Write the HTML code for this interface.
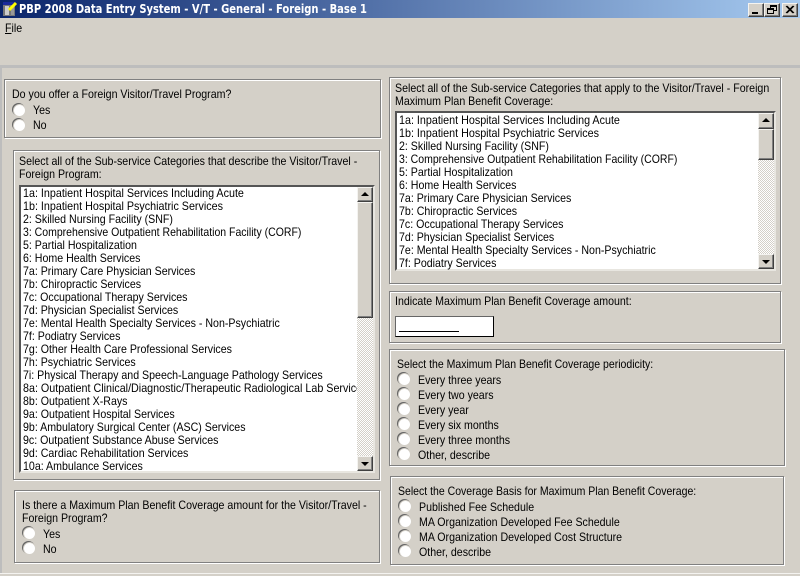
<!DOCTYPE html>
<html><head><meta charset="utf-8"><style>
html,body{margin:0;padding:0;background:#d4d0c8;}
#p{position:relative;width:800px;height:576px;overflow:hidden;background:#d4d0c8;font:12px/13px "Liberation Sans",sans-serif;color:#000;}
#p div{position:absolute;box-sizing:border-box;}
.t{white-space:nowrap;transform:scaleX(.885);transform-origin:0 0;}
.w{transform:scaleX(.895);}
.n{transform:scaleX(.875);}
.g{border:1px solid #808080;box-shadow:inset 1px 1px 0 #fff,1px 1px 0 #fff;}
.r{width:13px;height:13px;border-radius:50%;background:#fff;border:1px solid #d4d0c8;box-shadow:-1px -1px 0 0 #666;}
.l{background:#fff;border:2px solid;border-color:#555 #e8e6e0 #e8e6e0 #555;overflow:hidden;}
.tr{background-color:#eee;background-image:repeating-conic-gradient(#d4d0c8 0 25%,#fff 0 50%);background-size:2px 2px;}
.b{background:#d4d0c8;border:1px solid;border-color:#f4f3f0 #404040 #404040 #f4f3f0;box-shadow:inset -1px -1px 0 #808080;}
.up{width:0;height:0;border:4px solid transparent;border-top:0;border-bottom:4px solid #000;}
.dn{width:0;height:0;border:4px solid transparent;border-bottom:0;border-top:4px solid #000;}
</style></head><body><div id="p">

<div style="left:0;top:0;width:800px;height:18px;background:linear-gradient(90deg,#0a246a,#a6caf0);"></div>
<svg style="position:absolute;left:2px;top:1px" width="16" height="16" viewBox="0 0 16 16"><rect x="1" y="1" width="12" height="4" fill="#1a2a9a"/><rect x="1" y="4" width="12" height="11" fill="#777"/><rect x="3" y="5" width="4" height="9" fill="#ccc"/><rect x="9" y="5" width="3" height="9" fill="#999"/><path d="M7 9L14 2" stroke="#ff0" stroke-width="3"/></svg>
<div class="t" style="left:19px;top:2px;color:#fff;font:bold 12px/14px 'DejaVu Sans',sans-serif;transform:scaleX(.83);">PBP 2008 Data Entry System - V/T - General - Foreign - Base 1</div>
<div class="b" style="left:748px;top:3px;width:16px;height:14px;"></div>
<div style="left:752px;top:12px;width:6px;height:2px;background:#000;"></div>
<div class="b" style="left:764px;top:3px;width:16px;height:14px;"></div>
<div style="left:770px;top:5px;width:7px;height:6px;border:1px solid #000;border-top-width:2px;"></div>
<div style="left:767px;top:8px;width:7px;height:6px;border:1px solid #000;border-top-width:2px;background:#d4d0c8;"></div>
<div class="b" style="left:782px;top:3px;width:16px;height:14px;"></div>
<svg style="position:absolute;left:785px;top:5px" width="10" height="10"><path d="M1 1L8 8M2 1L9 8M8 1L1 8M9 1L2 8" stroke="#000" stroke-width="1"/></svg>

<div class="t" style="left:5px;top:22px;"><span style="text-decoration:underline">F</span>ile</div>
<div style="left:0;top:65px;width:800px;height:3px;background:#bdbdbd;"></div>
<div style="left:0;top:68px;width:2px;height:505px;background:#bdbdbd;"></div>
<div style="left:0;top:573px;width:800px;height:1px;background:#f4f3f0;"></div>

<div class="g" style="left:4px;top:79px;width:377px;height:59px;"></div>
<div class="t" style="left:12px;top:88px;">Do you offer a Foreign Visitor/Travel Program?</div>
<div class="r" style="left:13px;top:104px;"></div><div class="t" style="left:33px;top:104px;">Yes</div>
<div class="r" style="left:13px;top:119px;"></div><div class="t" style="left:33px;top:119px;">No</div>

<div class="g" style="left:13px;top:150px;width:367px;height:330px;"></div>
<div class="t" style="left:19px;top:155px;">Select all of the Sub-service Categories that describe the Visitor/Travel -</div>
<div class="t" style="left:19px;top:168px;">Foreign Program:</div>
<div class="l" style="left:19px;top:185px;width:356px;height:288px;"></div>
<div class="t w" style="left:23px;top:187px;">1a: Inpatient Hospital Services Including Acute</div>
<div class="t w" style="left:23px;top:200px;">1b: Inpatient Hospital Psychiatric Services</div>
<div class="t" style="left:23px;top:213px;">2: Skilled Nursing Facility (SNF)</div>
<div class="t n" style="left:23px;top:226px;">3: Comprehensive Outpatient Rehabilitation Facility (CORF)</div>
<div class="t" style="left:23px;top:239px;">5: Partial Hospitalization</div>
<div class="t" style="left:23px;top:252px;">6: Home Health Services</div>
<div class="t" style="left:23px;top:265px;">7a: Primary Care Physician Services</div>
<div class="t" style="left:23px;top:278px;">7b: Chiropractic Services</div>
<div class="t" style="left:23px;top:291px;">7c: Occupational Therapy Services</div>
<div class="t" style="left:23px;top:304px;">7d: Physician Specialist Services</div>
<div class="t" style="left:23px;top:317px;">7e: Mental Health Specialty Services - Non-Psychiatric</div>
<div class="t" style="left:23px;top:330px;">7f: Podiatry Services</div>
<div class="t" style="left:23px;top:343px;">7g: Other Health Care Professional Services</div>
<div class="t" style="left:23px;top:356px;">7h: Psychiatric Services</div>
<div class="t" style="left:23px;top:369px;">7i: Physical Therapy and Speech-Language Pathology Services</div>
<div style="left:21px;top:382px;width:336px;height:13px;overflow:hidden;"><div class="t w" style="left:2px;top:0;">8a: Outpatient Clinical/Diagnostic/Therapeutic Radiological Lab Services</div></div>
<div class="t" style="left:23px;top:395px;">8b: Outpatient X-Rays</div>
<div class="t" style="left:23px;top:408px;">9a: Outpatient Hospital Services</div>
<div class="t" style="left:23px;top:421px;">9b: Ambulatory Surgical Center (ASC) Services</div>
<div class="t" style="left:23px;top:434px;">9c: Outpatient Substance Abuse Services</div>
<div class="t" style="left:23px;top:447px;">9d: Cardiac Rehabilitation Services</div>
<div class="t" style="left:23px;top:460px;">10a: Ambulance Services</div>
<div class="tr" style="left:357px;top:187px;width:16px;height:284px;"></div>
<div class="b" style="left:357px;top:187px;width:16px;height:15px;"></div><div class="up" style="left:361px;top:192px;"></div>
<div class="b" style="left:357px;top:202px;width:16px;height:116px;"></div>
<div class="b" style="left:357px;top:456px;width:16px;height:15px;"></div><div class="dn" style="left:361px;top:462px;"></div>

<div class="g" style="left:14px;top:490px;width:366px;height:73px;"></div>
<div class="t" style="left:22px;top:499px;">Is there a Maximum Plan Benefit Coverage amount for the Visitor/Travel -</div>
<div class="t" style="left:22px;top:512px;">Foreign Program?</div>
<div class="r" style="left:23px;top:527px;"></div><div class="t" style="left:43px;top:528px;">Yes</div>
<div class="r" style="left:23px;top:542px;"></div><div class="t" style="left:43px;top:543px;">No</div>

<div class="g" style="left:389px;top:77px;width:392px;height:207px;"></div>
<div class="t" style="left:395px;top:82px;">Select all of the Sub-service Categories that apply to the Visitor/Travel - Foreign</div>
<div class="t" style="left:395px;top:95px;">Maximum Plan Benefit Coverage:</div>
<div class="l" style="left:395px;top:111px;width:381px;height:160px;"></div>
<div class="t w" style="left:399px;top:114px;">1a: Inpatient Hospital Services Including Acute</div>
<div class="t w" style="left:399px;top:127px;">1b: Inpatient Hospital Psychiatric Services</div>
<div class="t" style="left:399px;top:140px;">2: Skilled Nursing Facility (SNF)</div>
<div class="t n" style="left:399px;top:153px;">3: Comprehensive Outpatient Rehabilitation Facility (CORF)</div>
<div class="t" style="left:399px;top:166px;">5: Partial Hospitalization</div>
<div class="t" style="left:399px;top:179px;">6: Home Health Services</div>
<div class="t" style="left:399px;top:192px;">7a: Primary Care Physician Services</div>
<div class="t" style="left:399px;top:205px;">7b: Chiropractic Services</div>
<div class="t" style="left:399px;top:218px;">7c: Occupational Therapy Services</div>
<div class="t" style="left:399px;top:231px;">7d: Physician Specialist Services</div>
<div class="t" style="left:399px;top:244px;">7e: Mental Health Specialty Services - Non-Psychiatric</div>
<div class="t" style="left:399px;top:257px;">7f: Podiatry Services</div>
<div class="tr" style="left:758px;top:113px;width:16px;height:156px;"></div>
<div class="b" style="left:758px;top:113px;width:16px;height:16px;"></div><div class="up" style="left:762px;top:118px;"></div>
<div class="b" style="left:758px;top:129px;width:16px;height:31px;"></div>
<div class="b" style="left:758px;top:254px;width:16px;height:15px;"></div><div class="dn" style="left:762px;top:260px;"></div>

<div class="g" style="left:389px;top:291px;width:392px;height:52px;"></div>
<div class="t" style="left:395px;top:295px;">Indicate Maximum Plan Benefit Coverage amount:</div>
<div style="left:395px;top:316px;width:99px;height:21px;background:#fff;border:1px solid;border-color:#666 #000 #000 #666;"></div>
<div style="left:399px;top:331px;width:60px;height:1px;background:#000;"></div>

<div class="g" style="left:389px;top:349px;width:396px;height:117px;"></div>
<div class="t n" style="left:397px;top:358px;">Select the Maximum Plan Benefit Coverage periodicity:</div>
<div class="r" style="left:398px;top:373px;"></div><div class="t" style="left:418px;top:374px;">Every three years</div>
<div class="r" style="left:398px;top:388px;"></div><div class="t" style="left:418px;top:389px;">Every two years</div>
<div class="r" style="left:398px;top:403px;"></div><div class="t" style="left:418px;top:404px;">Every year</div>
<div class="r" style="left:398px;top:418px;"></div><div class="t" style="left:418px;top:419px;">Every six months</div>
<div class="r" style="left:398px;top:433px;"></div><div class="t" style="left:418px;top:434px;">Every three months</div>
<div class="r" style="left:398px;top:448px;"></div><div class="t" style="left:418px;top:449px;">Other, describe</div>

<div class="g" style="left:390px;top:476px;width:394px;height:89px;"></div>
<div class="t n" style="left:398px;top:485px;">Select the Coverage Basis for Maximum Plan Benefit Coverage:</div>
<div class="r" style="left:399px;top:500px;"></div><div class="t" style="left:419px;top:501px;">Published Fee Schedule</div>
<div class="r" style="left:399px;top:515px;"></div><div class="t" style="left:419px;top:516px;">MA Organization Developed Fee Schedule</div>
<div class="r" style="left:399px;top:530px;"></div><div class="t" style="left:419px;top:531px;">MA Organization Developed Cost Structure</div>
<div class="r" style="left:399px;top:545px;"></div><div class="t" style="left:419px;top:546px;">Other, describe</div>

</div></body></html>
